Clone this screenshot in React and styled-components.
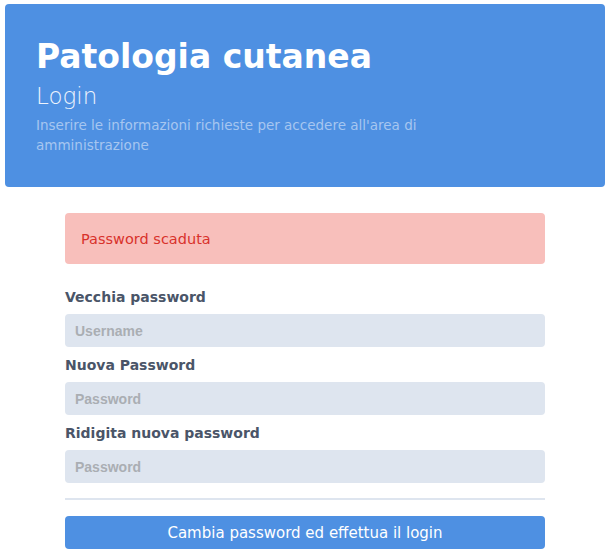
import React from "react";
import styled, { createGlobalStyle } from "styled-components";

const Global = createGlobalStyle`
  html, body { margin: 0; padding: 0; background: #fff; }
  body { font-family: "DejaVu Sans", "Noto Sans", sans-serif; }
  * { box-sizing: border-box; }
`;

const Page = styled.div`
  padding: 4px 6px 0 5px;
`;

const Header = styled.header`
  background: #4e90e2;
  border-radius: 4px;
  padding: 33px 31px 30px;
  height: 183px;
`;

const Title = styled.h1`
  margin: 0;
  color: #fff;
  font-size: 33px;
  line-height: 40px;
  font-weight: 700;
`;

const Subtitle = styled.h2`
  margin: 4px 0 0;
  color: #eef4fd;
  font-size: 23px;
  line-height: 30px;
  font-weight: 300;
`;

const Lead = styled.p`
  margin: 4px 0 0;
  color: #a6c6f0;
  font-size: 13.5px;
  line-height: 20px;
  max-width: 440px;
  font-weight: 400;
`;

const Form = styled.form`
  width: 480px;
  margin: 26px auto 0;
  display: flex;
  flex-direction: column;
`;

const Alert = styled.div`
  background: #f8bfbb;
  color: #d8322b;
  border-radius: 4px;
  height: 51px;
  padding: 0 16px;
  display: flex;
  align-items: center;
  font-size: 14.5px;
  font-weight: 400;
  margin-bottom: 23px;
`;

const Label = styled.label`
  display: block;
  color: #4a5568;
  font-size: 14px;
  font-weight: 700;
  line-height: 20px;
  margin: ${(p) => (p.$first ? "0" : "8px")} 0 7px;
`;

const Input = styled.input`
  display: block;
  width: 100%;
  height: 33px;
  border: none;
  border-radius: 4px;
  background: #dee5ef;
  padding: 0 10px;
  font-family: "Liberation Sans", Arial, sans-serif;
  font-size: 14px;
  font-weight: 700;
  color: #333;
  outline: none;
  &::placeholder { color: #aaaeb3; }
`;

const Rule = styled.hr`
  border: none;
  height: 2px;
  background: #dee5ef;
  margin: 15px 0 16px;
`;

const Button = styled.button`
  height: 33px;
  border: none;
  border-radius: 4px;
  background: #4e90e2;
  color: #fff;
  font-family: inherit;
  font-size: 15px;
  font-weight: 400;
  cursor: pointer;
`;

export default function App() {
  return (
    <>
      <Global />
      <Page>
        <Header>
          <Title>Patologia cutanea</Title>
          <Subtitle>Login</Subtitle>
          <Lead>Inserire le informazioni richieste per accedere all'area di amministrazione</Lead>
        </Header>
        <Form onSubmit={(e) => e.preventDefault()}>
          <Alert>Password scaduta</Alert>
          <Label $first>Vecchia password</Label>
          <Input type="password" placeholder="Username" />
          <Label>Nuova Password</Label>
          <Input type="password" placeholder="Password" />
          <Label>Ridigita nuova password</Label>
          <Input type="password" placeholder="Password" />
          <Rule />
          <Button type="submit">Cambia password ed effettua il login</Button>
        </Form>
      </Page>
    </>
  );
}
